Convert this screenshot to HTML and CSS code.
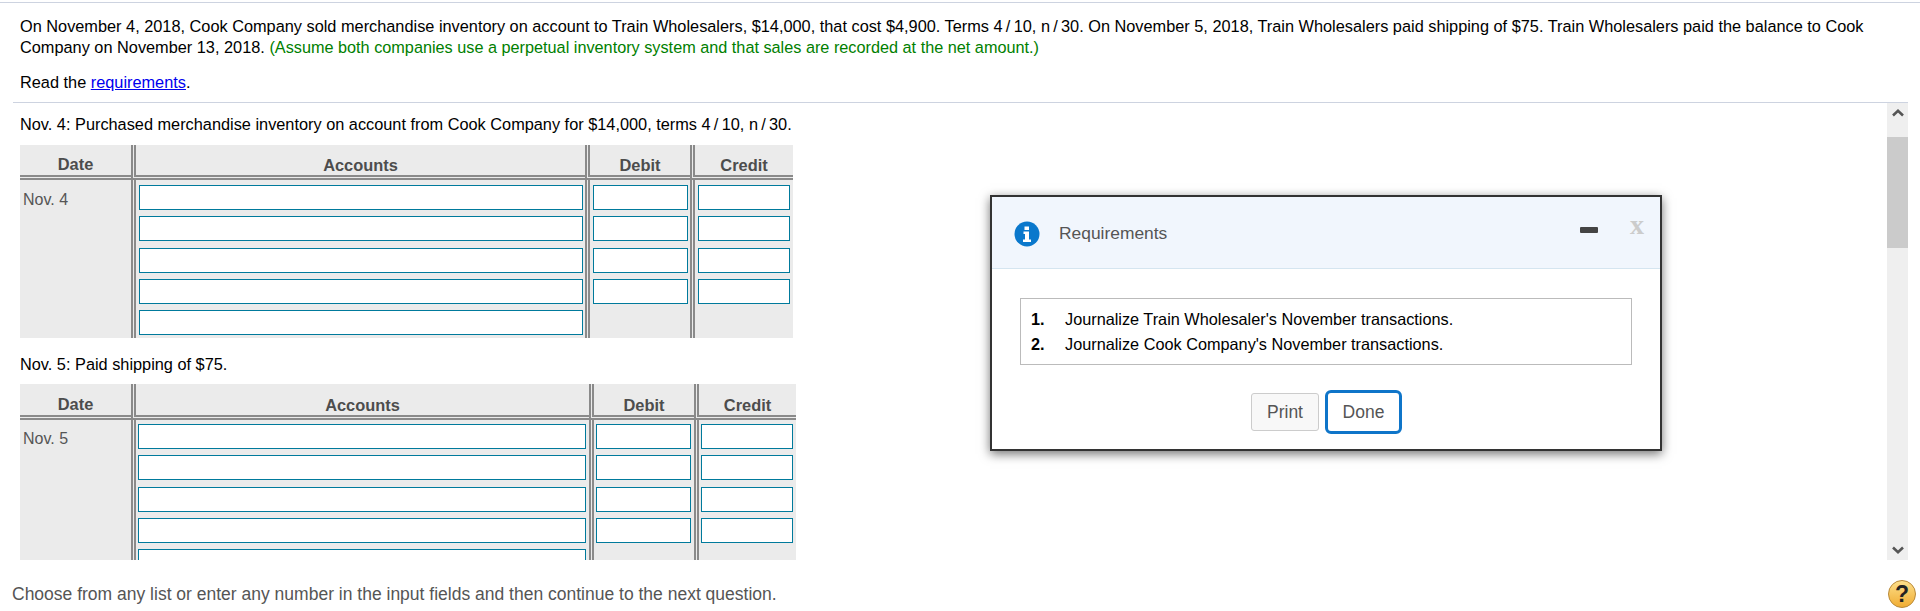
FILE: index.html
```html
<!DOCTYPE html>
<html lang="en">
<head>
<meta charset="utf-8">
<title>Requirements</title>
<link rel="stylesheet" href="styles.css">
</head>
<body>
<div class="page">
  <header class="intro">
    <p class="problem">On November 4, 2018, Cook Company sold merchandise inventory on account to Train Wholesalers, $14,000, that cost $4,900. Terms 4&#8201;/&#8201;10, n&#8201;/&#8201;30. On November 5, 2018, Train Wholesalers paid shipping of $75. Train Wholesalers paid the balance to Cook Company on November 13, 2018. <span class="hint">(Assume both companies use a perpetual inventory system and that sales are recorded at the net amount.)</span></p>
    <p class="read">Read the <a href="#">requirements</a>.</p>
  </header>
  <div class="work">
    <main class="scroll">
      <p class="caption">Nov. 4: Purchased merchandise inventory on account from Cook Company for $14,000, terms 4&#8201;/&#8201;10, n&#8201;/&#8201;30.</p>
      <section class="journal j1">
        <div class="th thdate">Date</div><div class="th sep">Accounts</div><div class="th sep">Debit</div><div class="th sep">Credit</div>
        <div class="td date">Nov. 4</div>
        <div class="td sep stack"><input><input><input><input><input></div>
        <div class="td sep stack"><input><input><input><input></div>
        <div class="td sep stack last"><input><input><input><input></div>
      </section>
      <p class="caption second">Nov. 5: Paid shipping of $75.</p>
      <section class="journal j2">
        <div class="th thdate">Date</div><div class="th sep">Accounts</div><div class="th sep">Debit</div><div class="th sep">Credit</div>
        <div class="td date">Nov. 5</div>
        <div class="td sep stack"><input><input><input><input><input></div>
        <div class="td sep stack"><input><input><input><input></div>
        <div class="td sep stack"><input><input><input><input></div>
      </section>
    </main>
    <aside class="scrollbar">
      <div class="arrow up"><svg width="12" height="8" viewBox="0 0 12 8"><path d="M1 6.500 6 1.800l5 4.700" fill="none" stroke="#555" stroke-width="2.600"/></svg></div>
      <div class="thumb"></div>
      <div class="rest"></div>
      <div class="arrow down"><svg width="12" height="8" viewBox="0 0 12 8"><path d="M1 1.500 6 6.200l5-4.700" fill="none" stroke="#555" stroke-width="2.600"/></svg></div>
    </aside>
  </div>
  <footer class="foot">
    <span>Choose from any list or enter any number in the input fields and then continue to the next question.</span>
    <svg class="help" width="30" height="30" viewBox="0 0 30 30">
      <defs><linearGradient id="gold" x1="0" y1="0" x2="0" y2="1"><stop offset="0" stop-color="#fde08c"/><stop offset="1" stop-color="#f0ac32"/></linearGradient></defs>
      <circle cx="15" cy="15" r="13.500" fill="url(#gold)" stroke="#b98a3a" stroke-width="1"/>
      <text x="15" y="23" class="help-mark">?</text>
    </svg>
  </footer>
</div>
<div class="dialog">
  <div class="dialog-head">
    <svg class="info" width="26" height="26" viewBox="0 0 26 26"><circle cx="13" cy="13" r="12.500" fill="#0a78cc"/><path d="M10.500 5.500h4.500v3.500h-4.500zM9.500 10.500h5.500v8h2v2.500h-8v-2.500h2v-5.500h-1.500z" fill="#fff"/></svg>
    <span class="dialog-title">Requirements</span>
    <span class="minimize"></span>
    <span class="close">x</span>
  </div>
  <div class="dialog-body">
    <ol class="req">
      <li><b>1.</b><span>Journalize Train Wholesaler's November transactions.</span></li>
      <li><b>2.</b><span>Journalize Cook Company's November transactions.</span></li>
    </ol>
    <div class="actions">
      <button class="btn">Print</button>
      <button class="btn primary">Done</button>
    </div>
  </div>
</div>
</body>
</html>
```
FILE: styles.css
```css
* { box-sizing: border-box; }
html, body { margin: 0; height: 611px; overflow: hidden; background: #fff; }
body { font-family: "Liberation Sans", Arial, sans-serif; font-size: 16.320px; color: #000; }
p { margin: 0; }
.page { height: 611px; display: flex; flex-direction: column; padding-top: 2px; }
.page::before { content: ""; display: block; height: 1px; background: #cdd3e0; }
.intro { margin: 0 12px 0 13px; padding: 13px 0 0 7px; height: 100px; border-bottom: 1px solid #cdd3e0; }
.problem { line-height: 21px; }
.hint { color: #008000; font-size: 16.260px; }
.read { margin-top: 14px; line-height: 21px; }
a { color: #0000ee; }
.work { display: flex; height: 457px; padding-left: 20px; }
.scroll { width: 1867px; height: 457px; overflow: hidden; }
.caption { height: 42px; padding-top: 11px; line-height: 21px; }
.caption.second { height: 46px; padding-top: 16px; }
.journal { display: grid; background: #ebebeb; }
.j1 { grid-template-columns: 111px 454px 105px 103px; width: 773px; }
.j2 { grid-template-columns: 111px 458px 105px 102px; width: 776px; }
.th { height: 35px; border-bottom: 5px double #8a8a8a; font-weight: bold; color: #4d4d4d; text-align: center; padding-top: 11px; font-size: 16.400px; line-height: 18px; }
.thdate { padding-top: 10px; }
.j2 .th { height: 36px; padding-top: 12px; }
.j2 .thdate { padding-top: 11px; }
.sep { border-left: 5px double #8a8a8a; }
.td { padding: 5px 2px 3px 3px; }
.td.last { padding-right: 3px; }
.j2 .td { padding: 4px 3px 3px 2px; }
.date { color: #555; line-height: 20px; font-size: 16px; }
.j1 .date { padding: 10px 3px 0; }
.j2 .date { padding: 9px 3px 0; }
.stack { display: flex; flex-direction: column; gap: 6.250px; }
input { display: block; width: 100%; height: 25px; border: 1px solid #007a9c; background: #fff; padding: 0; margin: 0; border-radius: 0; outline: 0; }
.scrollbar { width: 21px; height: 457px; display: flex; flex-direction: column; background: #efefef; }
.arrow { height: 34px; display: flex; justify-content: center; }
.up { padding-top: 6px; }
.down { align-items: flex-end; padding-bottom: 6px; }
.thumb { height: 111px; background: #cbcbcb; }
.rest { flex: 1; }
.foot { flex: 1; display: flex; align-items: center; justify-content: space-between; padding: 17px 3px 0 12px; color: #555; font-size: 17.500px; }
.help-mark { font: bold 23px "Liberation Sans", Arial, sans-serif; fill: #222; text-anchor: middle; }
.dialog { position: absolute; left: 990px; top: 195px; width: 672px; height: 256px; background: #fff; border: 2px solid #333; box-shadow: 0 3px 10px rgba(0,0,0,.55); }
.dialog-head { height: 72px; background: #f1f6fd; border-bottom: 1px solid #d5e5f0; display: flex; align-items: center; padding: 2px 0 0 22px; position: relative; }
.info { flex: none; }
.dialog-title { margin-left: 19px; color: #555; font-size: 17.400px; }
.minimize { position: absolute; left: 588px; top: 30px; width: 18px; height: 6px; background: #444; border-radius: 1px; }
.close { position: absolute; left: 638px; top: 17px; color: #ccc; font: bold 28px/22px "Liberation Serif", serif; }
.dialog-body { padding: 29px 28px 0; }
.req { list-style: none; margin: 0; padding: 8px 10px; height: 67px; border: 1px solid #bbb; font-size: 16.280px; }
.req li { display: flex; height: 25px; align-items: center; }
.req b { width: 34px; }
.actions { display: flex; justify-content: center; align-items: center; gap: 6px; margin-top: 25px; margin-left: 1px; }
.btn { height: 38px; width: 68px; background: #f8f8f8; border: 1px solid #ccc; border-radius: 3px; color: #555; font: 17.500px "Liberation Sans", Arial, sans-serif; padding: 0; }
.btn.primary { height: 44px; width: 77px; background: #fff; border: 3px solid #0f75c9; border-radius: 6px; }
```
